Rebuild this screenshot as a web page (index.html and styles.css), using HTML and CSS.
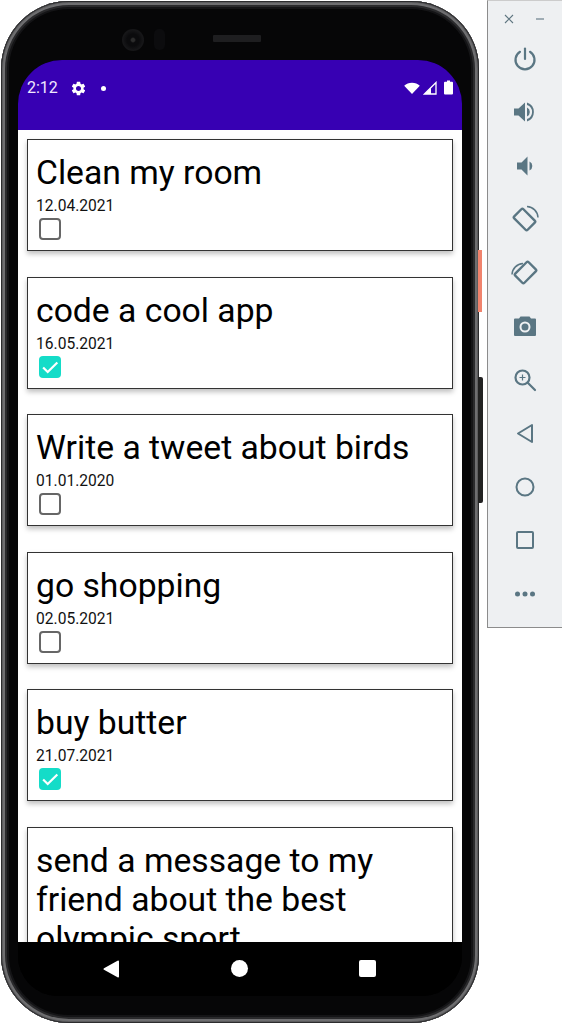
FILE: index.html
```html
<!DOCTYPE html>
<html lang="en">
<head>
    <meta charset="UTF-8">
    <meta name="viewport" content="width=device-width, initial-scale=1.0">
    <title>Todo App</title>
    <link rel="stylesheet" href="styles.css">
</head>
<body>
    <div class="phone">
        <div class="power-key"></div>
        <div class="volume-key"></div>
        <div class="earpiece-row">
            <div class="camera"></div>
            <div class="sensor"></div>
            <div class="speaker"></div>
        </div>
        <div class="screen">
            <div class="status-bar">
                <span class="clock">2:12</span>
                <svg class="gear" viewBox="0 0 24 24"><path d="M19.14 12.94c.04-.3.06-.61.06-.94 0-.32-.02-.64-.07-.94l2.03-1.58c.18-.14.23-.41.12-.61l-1.92-3.32c-.12-.22-.37-.29-.59-.22l-2.39.96c-.5-.38-1.03-.7-1.62-.94l-.36-2.54c-.04-.24-.24-.41-.48-.41h-3.84c-.24 0-.43.17-.47.41l-.36 2.54c-.59.24-1.13.57-1.62.94l-2.39-.96c-.22-.08-.47 0-.59.22L2.74 8.87c-.12.21-.08.47.12.61l2.03 1.58c-.05.3-.09.63-.09.94s.02.64.07.94l-2.03 1.58c-.18.14-.23.41-.12.61l1.92 3.32c.12.22.37.29.59.22l2.39-.96c.5.38 1.03.7 1.62.94l.36 2.54c.05.24.24.41.48.41h3.84c.24 0 .44-.17.47-.41l.36-2.54c.59-.24 1.13-.56 1.62-.94l2.39.96c.22.08.47 0 .59-.22l1.92-3.32c.12-.22.07-.47-.12-.61l-2.01-1.58zM12 15.6c-1.98 0-3.6-1.62-3.6-3.6s1.62-3.6 3.6-3.6 3.6 1.62 3.6 3.6-1.62 3.6-3.6 3.6z"/></svg>
                <div class="dot"></div>
                <div class="status-icons">
                    <svg class="wifi" viewBox="0 0 16 12"><path d="M8 11.500 0.200 3.200C2.200 1.300 4.900 0.300 8 0.300s5.800 1 7.800 2.900z"/></svg>
                    <svg class="signal" viewBox="0 0 14 14"><path d="M13 1.500V13H1.500z" fill="none" stroke="#fff" stroke-width="1.300"/><path d="M8 7V13H1.500L8 6.500z"/></svg>
                    <svg class="battery" viewBox="0 0 9 14"><path d="M3 0h3v1.200h2a1 1 0 0 1 1 1V13a1 1 0 0 1-1 1H1a1 1 0 0 1-1-1V2.200a1 1 0 0 1 1-1h2z"/></svg>
                </div>
            </div>

            <div class="todo-list">
                <div class="todo-card">
                    <p class="todo-title">Clean my room</p>
                    <p class="todo-date">12.04.2021</p>
                    <div class="check"></div>
                </div>
                <div class="todo-card">
                    <p class="todo-title">code a cool app</p>
                    <p class="todo-date">16.05.2021</p>
                    <div class="check done"><svg viewBox="0 0 24 24"><path d="M4.500 12.500l5 5L20 7" fill="none" stroke="#fff" stroke-width="2.400"/></svg></div>
                </div>
                <div class="todo-card">
                    <p class="todo-title">Write a tweet about birds</p>
                    <p class="todo-date">01.01.2020</p>
                    <div class="check"></div>
                </div>
                <div class="todo-card">
                    <p class="todo-title">go shopping</p>
                    <p class="todo-date">02.05.2021</p>
                    <div class="check"></div>
                </div>
                <div class="todo-card">
                    <p class="todo-title">buy butter</p>
                    <p class="todo-date">21.07.2021</p>
                    <div class="check done"><svg viewBox="0 0 24 24"><path d="M4.500 12.500l5 5L20 7" fill="none" stroke="#fff" stroke-width="2.400"/></svg></div>
                </div>
                <div class="todo-card">
                    <p class="todo-title">send a message to my friend about the best olympic sport</p>
                </div>
            </div>

            <div class="nav-bar">
                <svg class="nav-back" viewBox="0 0 16 18"><path d="M16 1.500V16.500a1 1 0 0 1-1.500.8L1 9.800a1 1 0 0 1 0-1.600L14.500.7A1 1 0 0 1 16 1.500z"/></svg>
                <div class="nav-home"></div>
                <div class="nav-recent"></div>
            </div>
        </div>
    </div>

    <div class="toolbar">
        <div class="toolbar-head">
            <svg viewBox="0 0 10 10"><path d="M1 1l8 8M9 1L1 9" stroke="#5f7681" stroke-width="1.100" fill="none"/></svg>
            <svg viewBox="0 0 10 10"><path d="M1 5h8" stroke="#5f7681" stroke-width="1.100" fill="none"/></svg>
        </div>
        <div class="tool">
            <svg viewBox="0 0 24 24" fill="none" stroke="#5a7683" stroke-width="2.200" stroke-linecap="round"><path d="M12 1.500V12"/><path d="M7 4.800a9.500 9.500 0 1 0 10 0"/></svg>
        </div>
        <div class="tool">
            <svg viewBox="0 0 24 24" fill="#5a7683"><path d="M1 8.500v7h4.500L12 21.500V2.500L5.500 8.500z"/><path d="M14 7.500a5 5 0 0 1 0 9z"/><path d="M14 2.500v2.400a7.500 7.500 0 0 1 0 14.200v2.400a10 10 0 0 0 0-19z"/></svg>
        </div>
        <div class="tool">
            <svg viewBox="0 0 24 24" fill="#5a7683"><path d="M4 8.500v7h4.500L14.500 21.500V2.500L8.500 8.500z"/><path d="M16.500 7.500a5 5 0 0 1 0 9z"/></svg>
        </div>
        <div class="tool">
            <svg class="rotate-icon" viewBox="0 0 28 28" fill="none" stroke="#5a7683"><rect x="7" y="5" width="13" height="19" rx="1.500" transform="rotate(-45 13.500 14.500)" stroke-width="2.400"/><path d="M16 1.500a11.500 11.500 0 0 1 11 11" stroke-width="1.500"/></svg>
        </div>
        <div class="tool">
            <svg class="rotate-icon" viewBox="0 0 28 28" fill="none" stroke="#5a7683"><rect x="8" y="4" width="13" height="19" rx="1.500" transform="rotate(45 14.500 13.500)" stroke-width="2.400"/><path d="M1 15.500a11.500 11.500 0 0 1 11-11" stroke-width="1.500"/></svg>
        </div>
        <div class="tool">
            <svg viewBox="0 0 24 24"><path fill="#5a7683" d="M7.500 2.500h9L18 4.500h4a1 1 0 0 1 1 1V21a1 1 0 0 1-1 1H2a1 1 0 0 1-1-1V5.500a1 1 0 0 1 1-1h4z"/><circle cx="12" cy="13" r="4.500" fill="none" stroke="#eef0f2" stroke-width="2"/></svg>
        </div>
        <div class="tool">
            <svg viewBox="0 0 24 24" fill="none" stroke="#5a7683" stroke-width="2.200"><circle cx="9.500" cy="9.500" r="7"/><path d="M14.500 14.500L22 22" stroke-linecap="round"/><path d="M6.500 9.500h6M9.500 6.500v6" stroke-width="1.200"/></svg>
        </div>
        <div class="tool">
            <svg viewBox="0 0 24 24" fill="none" stroke="#5a7683" stroke-width="2" stroke-linejoin="round"><path d="M19 4v17L5 12.500z"/></svg>
        </div>
        <div class="tool">
            <svg viewBox="0 0 24 24" fill="none" stroke="#5a7683" stroke-width="2"><circle cx="12" cy="12" r="8.500"/></svg>
        </div>
        <div class="tool">
            <svg viewBox="0 0 24 24" fill="none" stroke="#5a7683" stroke-width="2"><rect x="4" y="4" width="16" height="16" rx="1"/></svg>
        </div>
        <div class="tool">
            <svg viewBox="0 0 24 24" fill="#5a7683"><circle cx="4.500" cy="12" r="2.500"/><circle cx="12" cy="12" r="2.500"/><circle cx="19.500" cy="12" r="2.500"/></svg>
        </div>
    </div>
</body>
</html>
```

FILE: styles.css
```css
body {
    font-family: Roboto, Arial, sans-serif;
    background-color: #fff;
    margin: 0;
    width: 562px;
    height: 1024px;
    overflow: hidden;
    display: flex;
    align-items: flex-start;
}
.phone {
    position: relative;
    box-sizing: border-box;
    width: 478px;
    height: 1022px;
    margin: 1px 0 0 1px;
    padding: 0 17px;
    background-color: #060607;
    border-radius: 68px;
    box-shadow: inset 0 0 0 1px #2c2c2e, inset 0 0 0 2px #5c5c5e, inset 0 0 0 4px #6e6e70, inset 0 0 0 6px #2a2a2c, inset 0 0 0 8px #141416;
}
.power-key {
    position: absolute;
    left: 477px;
    top: 249px;
    width: 4px;
    height: 62px;
    background-color: #f0836d;
}
.volume-key {
    position: absolute;
    left: 477px;
    top: 376px;
    width: 5px;
    height: 126px;
    background-color: #222;
    border-radius: 0 2px 2px 0;
}
.earpiece-row {
    box-sizing: border-box;
    height: 59px;
    padding-top: 18px;
    display: flex;
    align-items: center;
}
.camera {
    width: 22px;
    height: 22px;
    margin-left: 104px;
    border-radius: 50%;
    background: radial-gradient(circle, #2c2c2c 0 1.500px, #0b0b0d 3px 6px, #161618 10px);
}
.sensor {
    width: 11px;
    height: 21px;
    margin-left: 10px;
    border-radius: 5px;
    background-color: #0c0c0e;
}
.speaker {
    width: 48px;
    height: 7px;
    margin: 0 0 3px 48px;
    border-radius: 1px;
    background-color: #1e1e20;
}
.screen {
    height: 936px;
    border-radius: 44px 44px 40px 40px;
    overflow: hidden;
    background-color: #000;
    display: flex;
    flex-direction: column;
}
.status-bar {
    height: 70px;
    flex-shrink: 0;
    background-color: #3700b3;
    color: #f0e8ff;
    display: flex;
    align-items: flex-start;
    padding: 19px 9px 0 9px;
    box-sizing: border-box;
}
.clock {
    font-size: 16px;
    line-height: 18px;
    width: 32px;
}
.gear {
    width: 17px;
    height: 17px;
    margin: 1px 0 0 11px;
    fill: #fff;
}
.dot {
    width: 5px;
    height: 5px;
    margin: 7px 0 0 14px;
    border-radius: 50%;
    background-color: #fff;
}
.status-icons {
    margin-left: auto;
    display: flex;
    align-items: flex-end;
    height: 15px;
    margin-top: 1px;
}
.status-icons svg {
    fill: #fff;
    display: block;
}
.wifi {
    width: 16px;
    height: 13px;
    margin-right: 3px;
}
.signal {
    width: 14px;
    height: 14px;
    margin-right: 7px;
}
.battery {
    width: 9px;
    height: 15px;
}
.todo-list {
    flex: 1;
    min-height: 0;
    overflow: hidden;
    background-color: #fff;
    padding: 9px 9px 0;
    display: flex;
    flex-direction: column;
    gap: 25.6px;
}
.todo-card {
    box-sizing: border-box;
    flex-shrink: 0;
    min-height: 112px;
    padding: 13px 8px 9px;
    border: 1.500px solid #333;
    background-color: #fff;
    box-shadow: 0 3px 5px rgba(0, 0, 0, 0.25);
}
.todo-title {
    margin: 0;
    font-size: 33.7px;
    line-height: 39px;
    color: #000;
}
.todo-date {
    margin: 5px 0 0;
    font-size: 15.6px;
    line-height: 19px;
    color: #111;
}
.check {
    box-sizing: border-box;
    width: 22px;
    height: 22px;
    margin: 2px 0 0 3px;
    border: 2px solid #666;
    border-radius: 4px;
}
.check.done {
    background-color: #14dcc8;
    border: 0;
}
.check svg {
    display: block;
}
.nav-bar {
    height: 54px;
    flex-shrink: 0;
    background-color: #000;
    display: flex;
    align-items: center;
    padding-bottom: 1px;
    box-sizing: border-box;
}
.nav-back {
    width: 16px;
    height: 18px;
    margin-left: 85px;
    fill: #fff;
}
.nav-home {
    width: 17px;
    height: 17px;
    margin-left: 112px;
    border-radius: 50%;
    background-color: #fff;
}
.nav-recent {
    width: 17px;
    height: 17px;
    margin-left: 111px;
    border-radius: 2px;
    background-color: #fff;
}
.toolbar {
    box-sizing: border-box;
    width: 75px;
    height: 628px;
    margin-left: 8px;
    background-color: #eef0f2;
    border: 1px solid #8c8c8c;
    border-top-color: #ccc;
    border-right: 0;
}
.toolbar-head {
    height: 31px;
    display: flex;
    align-items: center;
    gap: 21px;
    padding: 5px 0 0 16px;
    box-sizing: border-box;
}
.toolbar-head svg {
    width: 10px;
    height: 10px;
}
.tool {
    height: 53.500px;
    display: flex;
    align-items: center;
    justify-content: center;
}
.tool svg {
    width: 24px;
    height: 24px;
}
.tool svg.rotate-icon {
    width: 28px;
    height: 28px;
}
```
